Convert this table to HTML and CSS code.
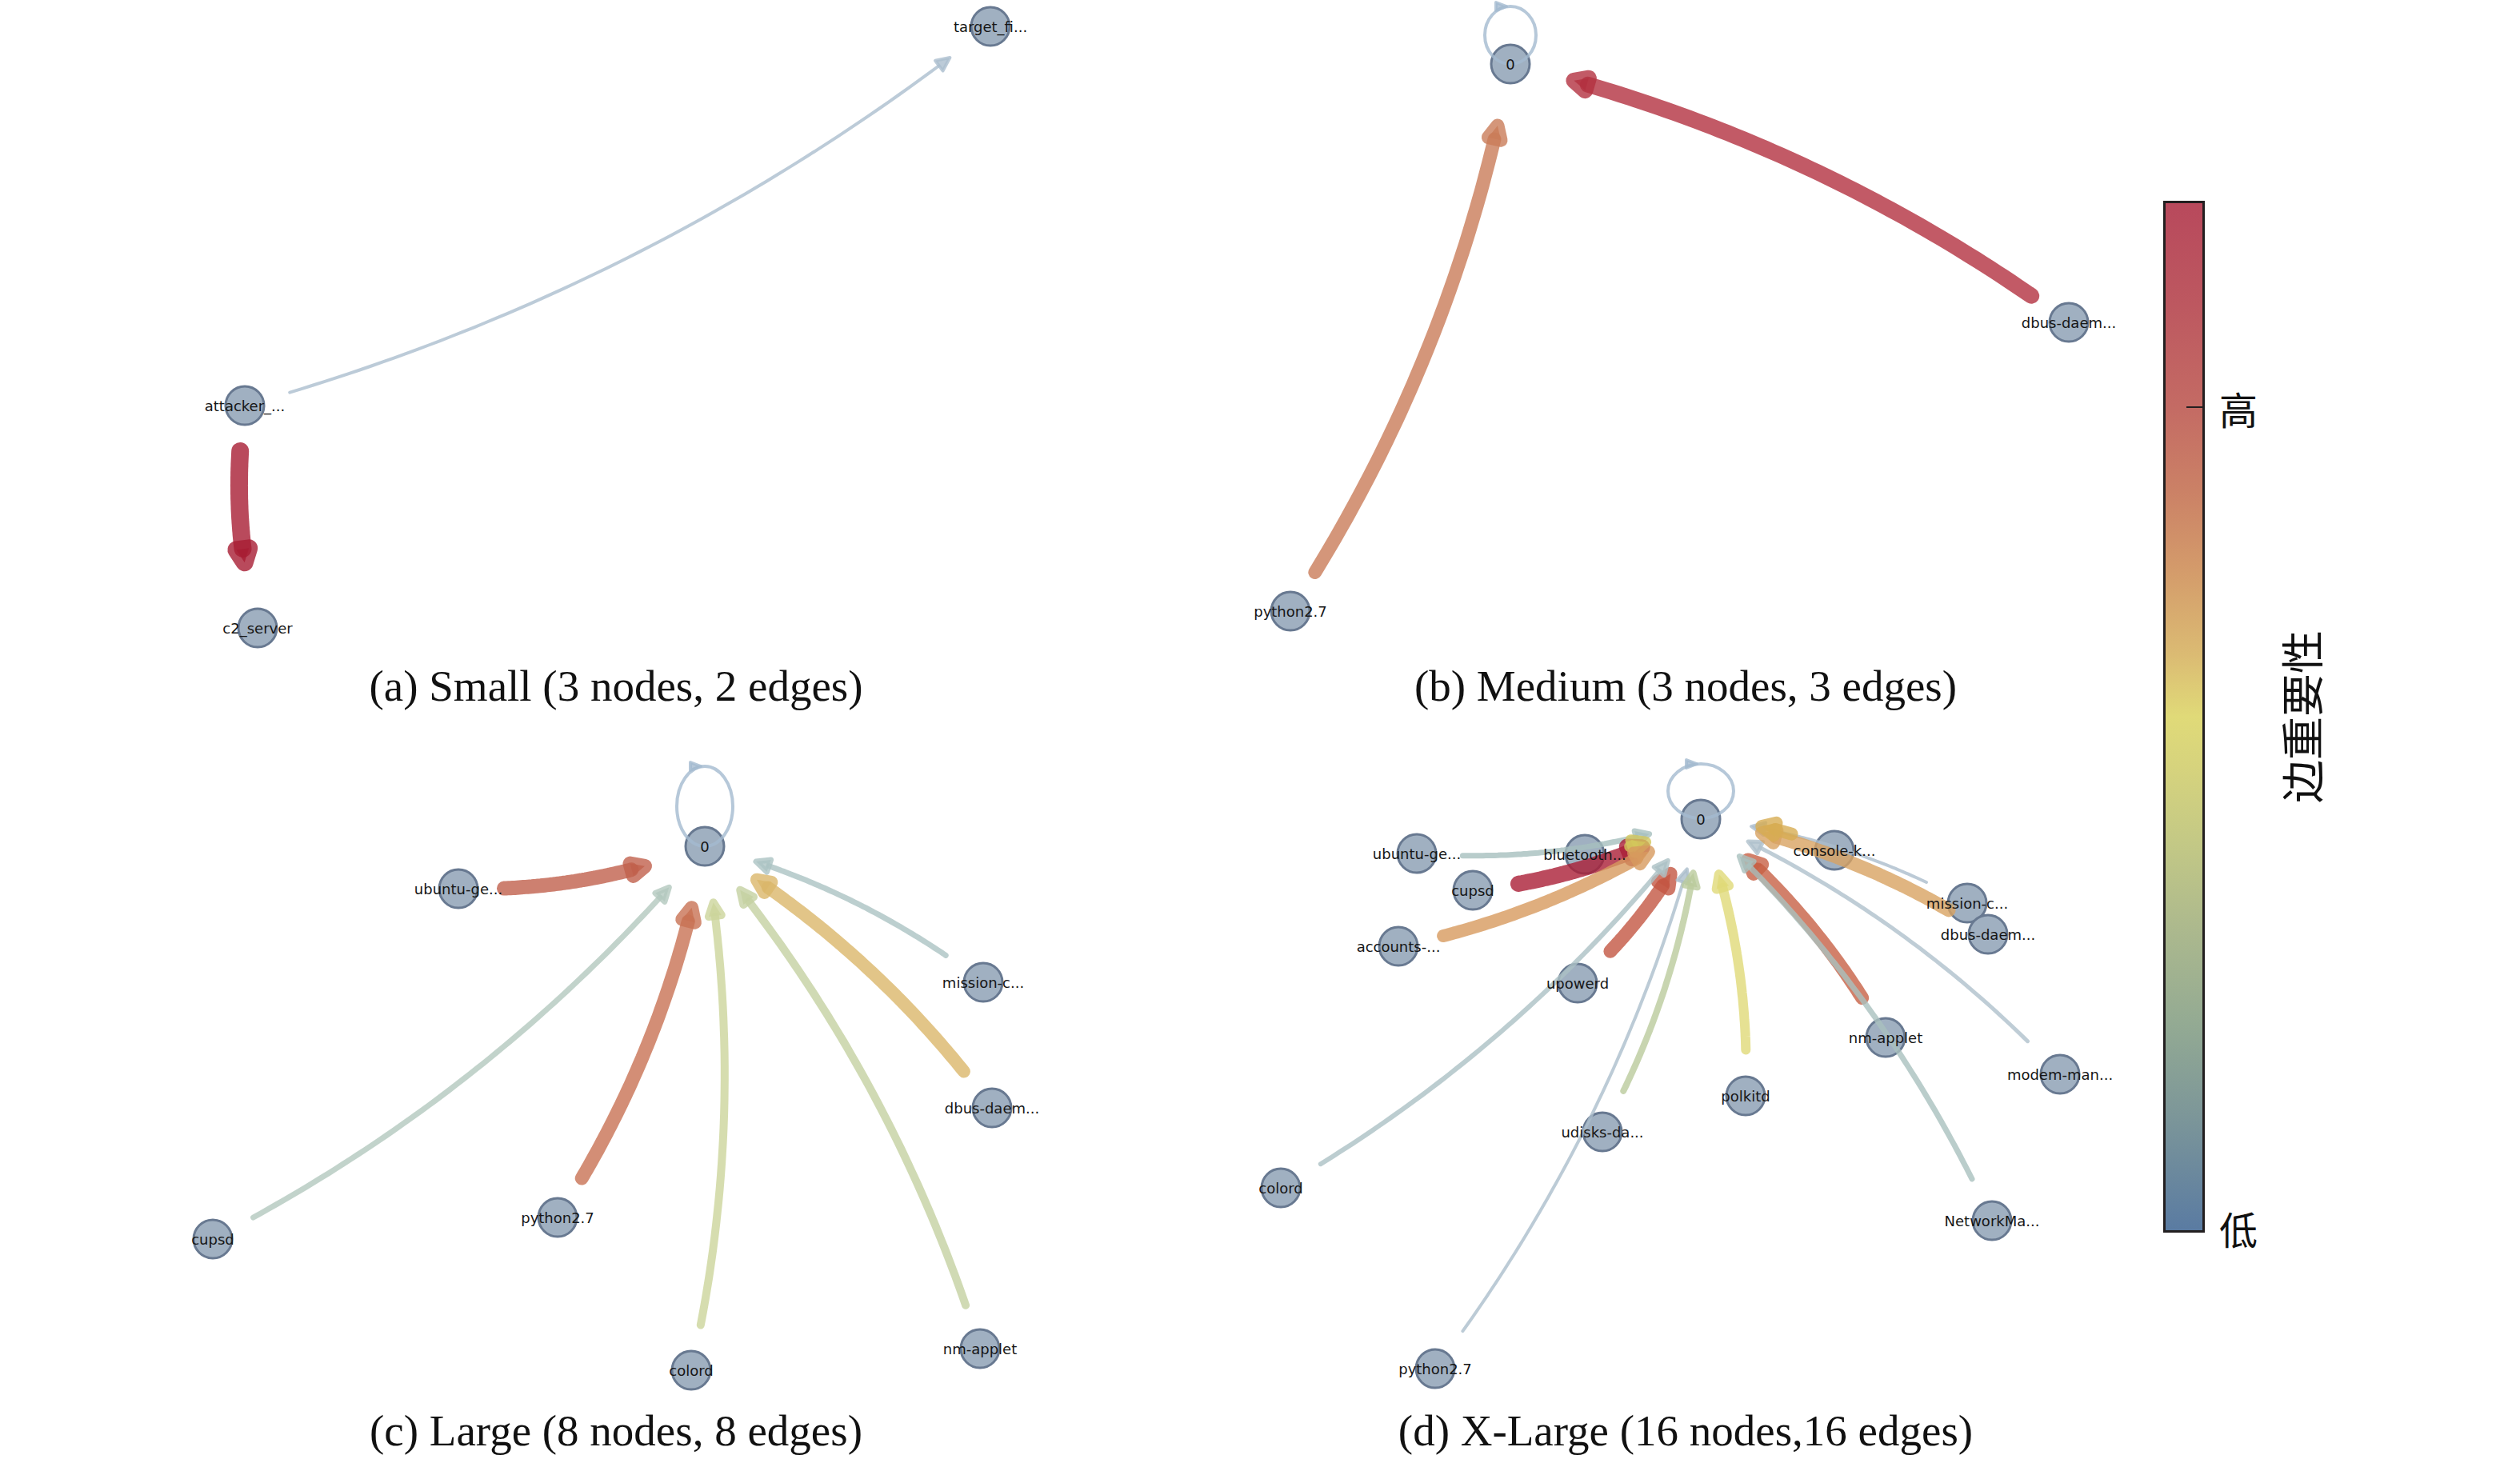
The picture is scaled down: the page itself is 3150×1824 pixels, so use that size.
FILE: index.html
```html
<!DOCTYPE html>
<html lang="zh-CN">
<head>
<meta charset="utf-8">
<title>Graph scale comparison</title>
<link rel="stylesheet" href="styles.css">
<script src="script.js" defer></script>
</head>
<body>
<main class="figure">
  <section class="panel">
    <svg class="plot plot--top" data-graph="a" viewBox="0 0 1540 830" xmlns="http://www.w3.org/2000/svg"></svg>
    <p class="caption">(a) Small (3 nodes, 2 edges)</p>
  </section>
  <section class="panel">
    <svg class="plot plot--top" data-graph="b" viewBox="1540 0 1134 830" xmlns="http://www.w3.org/2000/svg"></svg>
    <p class="caption">(b) Medium (3 nodes, 3 edges)</p>
  </section>
  <aside class="colorbar">
    <div class="cbar"><span class="cbar-tick"></span></div>
    <div class="cbar-ticks">
      <span class="tick-label tick-label--high">高</span>
      <span class="tick-label tick-label--low">低</span>
    </div>
    <div class="cbar-title"><span>边重要性</span></div>
  </aside>
  <section class="panel">
    <svg class="plot plot--bottom" data-graph="c" viewBox="0 885 1540 876" xmlns="http://www.w3.org/2000/svg"></svg>
    <p class="caption">(c) Large (8 nodes, 8 edges)</p>
  </section>
  <section class="panel">
    <svg class="plot plot--bottom" data-graph="d" viewBox="1540 885 1134 876" xmlns="http://www.w3.org/2000/svg"></svg>
    <p class="caption">(d) X-Large (16 nodes,16 edges)</p>
  </section>
</main>
</body>
</html>
```

FILE: styles.css
```css
html, body {
  margin: 0;
  padding: 0;
  background: #ffffff;
}

body {
  width: 3150px;
  height: 1824px;
  overflow: hidden;
  font-family: "DejaVu Sans", sans-serif;
  color: #111111;
}

.figure {
  display: grid;
  grid-template-columns: 1540px 1134px 476px;
  grid-template-rows: auto auto;
}

.panel {
  display: flex;
  flex-direction: column;
}

.plot {
  display: block;
  width: 100%;
  overflow: visible;
}

.plot--top {
  height: 830px;
}

.plot--bottom {
  height: 876px;
}

.caption {
  margin: 0;
  font-family: "Liberation Serif", "Times New Roman", serif;
  font-size: 55px;
  line-height: 55px;
  text-align: center;
  white-space: nowrap;
  color: #111111;
}

/* graph elements */
.node {
  fill: #a0b0c1;
  stroke: #687991;
  stroke-width: 3;
}

.node-label {
  font-family: "DejaVu Sans", sans-serif;
  font-size: 18px;
  fill: #161616;
  text-anchor: middle;
  dominant-baseline: central;
}

.edge-line {
  fill: none;
  stroke-linecap: round;
  stroke-linejoin: round;
  stroke-opacity: 0.8;
}

.edge-head {
  fill-opacity: 0.8;
  stroke-opacity: 0.8;
  stroke-linejoin: round;
}

/* colour bar */
.colorbar {
  grid-column: 3;
  grid-row: 1 / span 2;
  display: flex;
  align-items: flex-start;
}

.cbar {
  position: relative;
  margin: 251px 0 0 30px;
  width: 46px;
  height: 1284px;
  border: 3px solid #231f20;
  background: linear-gradient(to bottom,
    #b8495c 0%,
    #bd5860 10%,
    #c46b64 20%,
    #cb8166 28%,
    #d49c6b 36%,
    #dbbb73 44%,
    #e0da78 50%,
    #d6d37d 55%,
    #c4c985 62%,
    #aeba8d 70%,
    #93aa93 80%,
    #7c9699 89%,
    #5a7ba2 100%);
}

.cbar-tick {
  position: absolute;
  right: 0;
  top: 254px;
  width: 20px;
  height: 2px;
  background: #231f20;
}

.cbar-ticks {
  display: flex;
  flex-direction: column;
  width: 50px;
  height: 1290px;
  margin: 251px 0 0 18px;
}

.tick-label {
  font-family: "Noto Sans CJK SC", sans-serif;
  font-size: 48px;
  line-height: 50px;
  color: #111111;
}

.tick-label--high {
  margin-top: 234px;
}

.tick-label--low {
  margin-top: auto;
  margin-bottom: -19px;
}

.cbar-title {
  display: flex;
  align-items: center;
  justify-content: center;
  width: 52px;
  height: 1290px;
  margin: 251px 0 0 26px;
}

.cbar-title span {
  display: inline-block;
  transform: rotate(-90deg);
  font-family: "Noto Sans CJK SC", sans-serif;
  font-size: 54px;
  line-height: 54px;
  white-space: nowrap;
  color: #111111;
}
```

FILE: script.js
```js
(function () {
  var NS = 'http://www.w3.org/2000/svg';
  var ALPHA = 0.8;
  var HEAD_L = 17;
  var HEAD_W = 8;
  var SHRINK_A = 57;

  var GRAPHS = {
    a: {
      nodes: {
        att: [306, 507, 'attacker_...'],
        c2: [322, 785, 'c2_server'],
        tgt: [1238, 33, 'target_fi...']
      },
      edges: [
        ['att', 'tgt', 4, '#bccbd8'],
        ['att', 'c2', 22, '#b94a5c']
      ]
    },
    b: {
      nodes: {
        z: [1888, 80, '0'],
        db: [2586, 403, 'dbus-daem...'],
        py: [1613, 764, 'python2.7']
      },
      loop: { node: 'z', rx: 32, ry: 36, off: 36, color: '#b6c8d9' },
      edges: [
        ['db', 'z', 20, '#c25a66'],
        ['py', 'z', 17, '#d4967a']
      ]
    },
    c: {
      nodes: {
        z: [881, 1058, '0'],
        ub: [573, 1111, 'ubuntu-ge...'],
        mi: [1229, 1228, 'mission-c...'],
        db: [1240, 1385, 'dbus-daem...'],
        cu: [266, 1549, 'cupsd'],
        py: [697, 1522, 'python2.7'],
        co: [864, 1713, 'colord'],
        nm: [1225, 1686, 'nm-applet']
      },
      loop: { node: 'z', rx: 35, ry: 50, off: 50, color: '#b6c8d9' },
      edges: [
        ['ub', 'z', 18, '#cd8070'],
        ['cu', 'z', 7, '#c2d3cb'],
        ['py', 'z', 17, '#d38e76'],
        ['co', 'z', 10, '#d6ddaf'],
        ['nm', 'z', 10, '#d0dab4'],
        ['db', 'z', 16, '#e2c588'],
        ['mi', 'z', 7, '#bccfcf']
      ]
    },
    d: {
      nodes: {
        z: [2126, 1024, '0'],
        ub: [1771, 1067, 'ubuntu-ge...'],
        bt: [1981, 1068, 'bluetooth...'],
        cu: [1841, 1113, 'cupsd'],
        ac: [1748, 1183, 'accounts-...'],
        up: [1972, 1229, 'upowerd'],
        cs: [2293, 1063, 'console-k...'],
        mi: [2459, 1129, 'mission-c...'],
        db: [2485, 1168, 'dbus-daem...'],
        nm: [2357, 1297, 'nm-applet'],
        mo: [2575, 1343, 'modem-man...'],
        po: [2182, 1370, 'polkitd'],
        ud: [2003, 1415, 'udisks-da...'],
        co: [1601, 1485, 'colord'],
        nw: [2490, 1526, 'NetworkMa...'],
        py: [1794, 1711, 'python2.7']
      },
      loop: { node: 'z', rx: 41, ry: 34, off: 35, color: '#b6c8d9' },
      edges: [
        ['ub', 'z', 7, '#b8cccb'],
        ['cu', 'z', 20, '#bb4b5e'],
        ['bt', 'z', 14, '#dcd27c'],
        ['ac', 'z', 16, '#dfae7e'],
        ['up', 'z', 17, '#cf7868'],
        ['co', 'z', 6, '#bccdd0'],
        ['py', 'z', 4, '#bccbd6'],
        ['ud', 'z', 8, '#c8d5b0'],
        ['po', 'z', 12, '#e6e193'],
        ['nm', 'z', 17, '#d2806a'],
        ['nw', 'z', 7, '#bacdcb'],
        ['mo', 'z', 5, '#bfcdd6'],
        ['mi', 'z', 4, '#bccad6'],
        ['db', 'z', 17, '#e0b581'],
        ['cs', 'z', 16, '#dfbd75']
      ]
    }
  };

  function baseColor(hex) {
    var v = [
      parseInt(hex.substr(1, 2), 16),
      parseInt(hex.substr(3, 2), 16),
      parseInt(hex.substr(5, 2), 16)
    ];
    var c = v.map(function (x) {
      var y = Math.round((x - (1 - ALPHA) * 255) / ALPHA);
      return Math.max(0, Math.min(255, y));
    });
    return 'rgb(' + c.join(',') + ')';
  }

  function el(name, attrs, parent) {
    var e = document.createElementNS(NS, name);
    for (var k in attrs) {
      if (Object.prototype.hasOwnProperty.call(attrs, k)) e.setAttribute(k, attrs[k]);
    }
    parent.appendChild(e);
    return e;
  }

  function quad(S, C, T, t) {
    var u = 1 - t;
    return [u * u * S[0] + 2 * u * t * C[0] + t * t * T[0],
            u * u * S[1] + 2 * u * t * C[1] + t * t * T[1]];
  }

  function deriv(S, C, T, t) {
    return [2 * (1 - t) * (C[0] - S[0]) + 2 * t * (T[0] - C[0]),
            2 * (1 - t) * (C[1] - S[1]) + 2 * t * (T[1] - C[1])];
  }

  function dist(p, q) {
    return Math.sqrt((p[0] - q[0]) * (p[0] - q[0]) + (p[1] - q[1]) * (p[1] - q[1]));
  }

  function fmt(p) {
    return p[0].toFixed(1) + ',' + p[1].toFixed(1);
  }

  function drawHead(layer, V, d, L, W, w, col) {
    var n = [-d[1], d[0]];
    var b = [V[0] - L * d[0], V[1] - L * d[1]];
    var pts = [V, [b[0] + W * n[0], b[1] + W * n[1]], [b[0] - W * n[0], b[1] - W * n[1]]];
    el('polygon', {
      'class': 'edge-head',
      points: pts.map(fmt).join(' '),
      fill: col,
      stroke: col,
      'stroke-width': w
    }, layer);
  }

  function drawEdge(layer, S, T, w, hex) {
    var C = [(S[0] + T[0]) / 2 - 0.1 * (T[1] - S[1]),
             (S[1] + T[1]) / 2 + 0.1 * (T[0] - S[0])];
    var N = 600, i, t0 = 0, t1 = 1, te;
    for (i = 0; i <= N; i++) {
      if (dist(quad(S, C, T, i / N), S) >= SHRINK_A) { t0 = i / N; break; }
    }
    var dB = 59 + 1.1 * w;
    for (i = N; i >= 0; i--) {
      if (dist(quad(S, C, T, i / N), T) >= dB) { t1 = i / N; break; }
    }
    var V = quad(S, C, T, t1);
    var d = deriv(S, C, T, t1);
    var len = Math.sqrt(d[0] * d[0] + d[1] * d[1]);
    d = [d[0] / len, d[1] / len];
    te = t1;
    for (i = Math.round(t1 * N); i >= 0; i--) {
      if (dist(quad(S, C, T, i / N), V) >= HEAD_L) { te = i / N; break; }
    }
    var col = baseColor(hex);
    if (te > t0) {
      var pts = [];
      var steps = 60;
      for (i = 0; i <= steps; i++) {
        pts.push(fmt(quad(S, C, T, t0 + (te - t0) * i / steps)));
      }
      el('path', {
        'class': 'edge-line',
        d: 'M' + pts.join(' L'),
        stroke: col,
        'stroke-width': w
      }, layer);
    }
    drawHead(layer, V, d, HEAD_L, HEAD_W, w, col);
  }

  function drawLoop(layer, node, loop) {
    var col = baseColor(loop.color);
    var cy = node[1] - loop.off;
    el('ellipse', {
      'class': 'edge-line',
      cx: node[0],
      cy: cy,
      rx: loop.rx,
      ry: loop.ry,
      stroke: col,
      'stroke-width': 4
    }, layer);
    drawHead(layer, [node[0] - 5, cy - loop.ry], [1, 0], 13, 5, 4, col);
  }

  function render(svg, g) {
    var nodeLayer = el('g', { 'class': 'nodes' }, svg);
    var edgeLayer = el('g', { 'class': 'edges' }, svg);
    var labelLayer = el('g', { 'class': 'labels' }, svg);
    var key;
    for (key in g.nodes) {
      var n = g.nodes[key];
      el('circle', { 'class': 'node', cx: n[0], cy: n[1], r: 24 }, nodeLayer);
      var t = el('text', { 'class': 'node-label', x: n[0], y: n[1] }, labelLayer);
      t.textContent = n[2];
    }
    if (g.loop) drawLoop(edgeLayer, g.nodes[g.loop.node], g.loop);
    g.edges.forEach(function (e) {
      drawEdge(edgeLayer, g.nodes[e[0]], g.nodes[e[1]], e[2], e[3]);
    });
  }

  function init() {
    var svgs = document.querySelectorAll('svg[data-graph]');
    for (var i = 0; i < svgs.length; i++) {
      var g = GRAPHS[svgs[i].getAttribute('data-graph')];
      if (g) render(svgs[i], g);
    }
  }

  if (document.readyState === 'loading') {
    document.addEventListener('DOMContentLoaded', init);
  } else {
    init();
  }
})();
```
